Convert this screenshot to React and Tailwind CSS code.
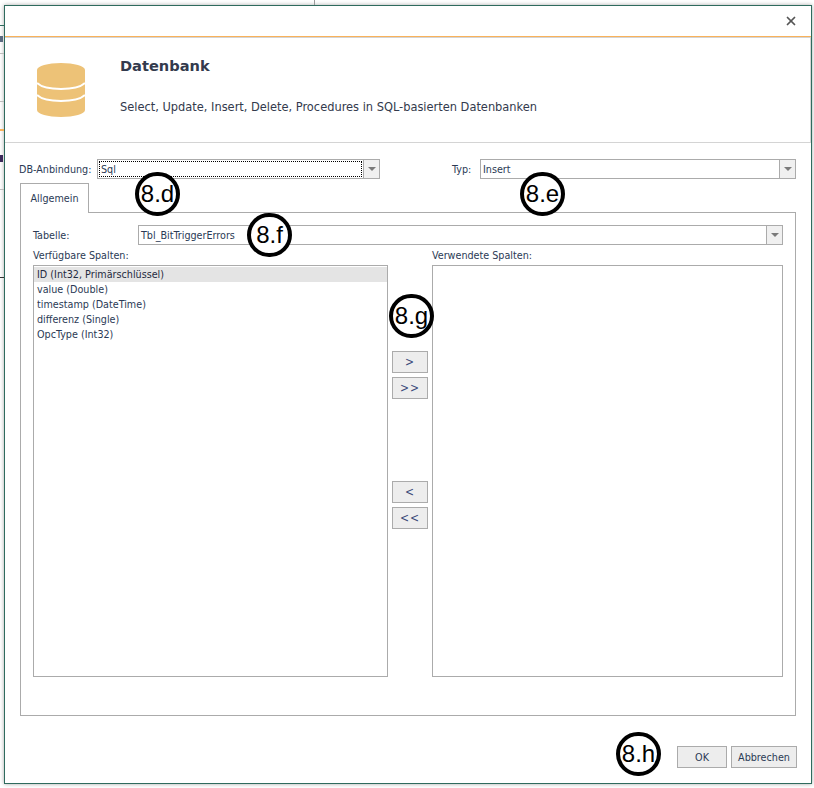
import { X } from 'lucide-react';

const FONT = "font-['DejaVu_Sans_Condensed','DejaVu_Sans',sans-serif]";

const Combo = ({ value, className = '', focused = false }) => (
  <div className={`flex h-5 border border-[#ababab] bg-white ${className}`}>
    <div className="flex min-w-0 flex-1 items-center p-px">
      <div className={`flex h-full flex-1 items-center px-px ${focused ? 'border border-dotted border-black' : ''}`}>
        {value}
      </div>
    </div>
    <div className="flex w-4 items-center justify-center border-l border-[#ababab] bg-[#f0f0f0]">
      <div className="h-0 w-0 border-x-[4px] border-t-[4px] border-x-transparent border-t-[#7a7a7a]" />
    </div>
  </div>
);

const MoveButton = ({ label }) => (
  <button className="flex h-[22px] w-9 items-center justify-center border border-[#ababab] bg-[#ededed] text-[12px] tracking-[1px] text-[#3a4a7a]">
    {label}
  </button>
);

const Marker = ({ label, className }) => (
  <div className={`absolute flex h-[44px] w-[45px] items-center justify-center rounded-full border-[4px] border-black bg-white font-['Liberation_Sans',sans-serif] text-[24px] leading-none text-black ${className}`}>
    {label}
  </div>
);

export default function App() {
  const columns = ['ID (Int32, Primärschlüssel)', 'value (Double)', 'timestamp (DateTime)', 'differenz (Single)', 'OpcType (Int32)'];

  return (
    <div className={`relative h-[788px] w-[814px] overflow-hidden bg-white pl-1 pt-[5px] text-[10.7px] leading-[15px] text-[#2b3a55] ${FONT}`}>
      {/* window behind the dialog */}
      <div className="absolute left-0 top-[25px] h-px w-1 bg-[#2f6b5e]" />
      <div className="absolute left-0 top-[36px] h-[6px] w-[3px] bg-[#5a6a80]" />
      <div className="absolute left-0 top-[53px] h-px w-1 bg-[#bdbdbd]" />
      <div className="absolute left-0 top-[101px] h-px w-1 bg-[#bdbdbd]" />
      <div className="absolute left-0 top-[129px] h-[2px] w-1 bg-[#f9b25a]" />
      <div className="absolute left-0 top-[155px] h-[7px] w-[3px] bg-[#3b2a5a]" />
      <div className="absolute left-0 top-[189px] h-px w-1 bg-[#bdbdbd]" />
      <div className="absolute left-0 top-[277px] h-px w-1 bg-[#333333]" />
      <div className="absolute left-[314px] top-0 h-[5px] w-px bg-[#9a9a9a]" />

      <div className="flex h-[779px] w-[808px] flex-col border border-[#2f6b5e] bg-white shadow-[0_0_4px_rgba(0,0,0,0.35)]">
        {/* title bar */}
        <div className="flex h-[31px] items-center justify-end border-b border-[#f9b25a] pr-[13px]">
          <X size={14} strokeWidth={3} className="text-[#555555]" />
        </div>

        {/* header */}
        <div className="flex h-[106px] border border-l-0 border-[#d4d4d4]">
          <div className="flex w-[115px] shrink-0 items-start pl-[32px] pt-[25px]">
            <svg width="48" height="54" viewBox="0 0 48 54">
              <path fill="#edc277" d="M0 7C0 3 11 0 24 0s24 3 24 7v40c0 4-11 7-24 7S0 51 0 47z" />
              <path fill="none" stroke="#fff" strokeWidth="2" d="M0 20c4 4 13 6 24 6s20-2 24-6M0 32c4 4 13 6 24 6s20-2 24-6" />
            </svg>
          </div>
          <div className="flex flex-col pt-[17px] text-[#333a4d]">
            <div className="font-['DejaVu_Sans',sans-serif] text-[14.6px] font-bold leading-[22px]">Datenbank</div>
            <div className="mt-[21px] text-[12.7px] leading-[18px]">Select, Update, Insert, Delete, Procedures in SQL-basierten Datenbanken</div>
          </div>
        </div>

        {/* form */}
        <div className="flex flex-1 flex-col px-[15px] pt-4">
          <div className="flex items-center">
            <span className="-ml-px w-[78px] shrink-0 whitespace-nowrap">DB-Anbindung:</span>
            <Combo value="Sql" focused className="w-[283px]" />
            <span className="ml-[72px] w-[28px] shrink-0">Typ:</span>
            <Combo value="Insert" className="w-[316px]" />
          </div>

          {/* tabs */}
          <div className="mt-1 flex flex-col">
            <div className="relative z-10 -mb-px flex h-[30px] w-[69px] items-center justify-center border border-b-0 border-[#ababab] bg-white">Allgemein</div>
            <div className="flex h-[504px] w-[776px] flex-col border border-[#ababab] px-3 pt-3">
              <div className="flex items-center">
                <span className="w-[105px] shrink-0">Tabelle:</span>
                <Combo value="Tbl_BitTriggerErrors" className="w-[645px]" />
              </div>

              <div className="mt-[3px] flex">
                <div className="flex w-[355px] flex-col">
                  <span className="h-[17px]">Verfügbare Spalten:</span>
                  <div className="flex h-[412px] flex-col border border-[#ababab] pt-px">
                    {columns.map((col, idx) => (
                      <div key={col} className={`h-[15px] px-[3px] ${idx === 0 ? 'bg-[#e4e4e4] text-[#1f2a40]' : ''}`}>{col}</div>
                    ))}
                  </div>
                </div>

                <div className="flex w-11 flex-col items-center pt-[103px]">
                  <MoveButton label=">" />
                  <div className="mt-1"><MoveButton label=">>" /></div>
                  <div className="mt-[82px]"><MoveButton label="<" /></div>
                  <div className="mt-1"><MoveButton label="<<" /></div>
                </div>

                <div className="flex w-[351px] flex-col">
                  <span className="h-[17px]">Verwendete Spalten:</span>
                  <div className="h-[412px] border border-[#ababab]" />
                </div>
              </div>
            </div>
          </div>

          {/* footer */}
          <div className="-mr-px mt-[30px] flex justify-end gap-1">
            <button className="h-[22px] w-[50px] border border-[#ababab] bg-[#ededed]">OK</button>
            <button className="h-[22px] w-[66px] border border-[#ababab] bg-[#ededed]">Abbrechen</button>
          </div>
        </div>
      </div>

      <Marker label="8.d" className="left-[135px] top-[172px]" />
      <Marker label="8.e" className="left-[520px] top-[172px]" />
      <Marker label="8.f" className="left-[247px] top-[213px]" />
      <Marker label="8.g" className="left-[389px] top-[294px]" />
      <Marker label="8.h" className="left-[616px] top-[732px]" />
    </div>
  );
}
